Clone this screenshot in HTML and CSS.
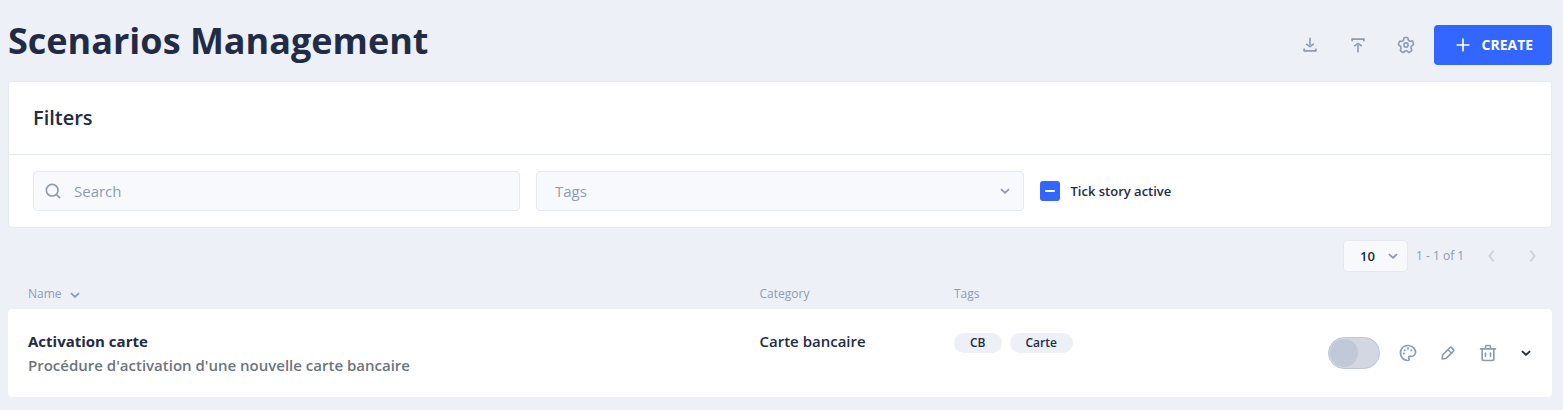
FILE: index.html
```html
<!DOCTYPE html>
<html lang="en">
<head>
<meta charset="utf-8">
<title>Scenarios Management</title>
<link rel="stylesheet" href="styles.css">
</head>
<body>
<svg class="defs" width="0" height="0">
  <symbol id="chevron" viewBox="0 0 16 16"><path d="M4.5 6.6 8 9.9l3.5-3.3" fill="none" stroke="currentColor" stroke-width="1.9" stroke-linecap="round" stroke-linejoin="round"/></symbol>
  <symbol id="angle" viewBox="0 0 16 16"><path d="M9.5 3 5.5 8l4 5" fill="none" stroke="currentColor" stroke-width="1.6" stroke-linecap="round" stroke-linejoin="round"/></symbol>
</svg>
<header class="header">
  <h1 class="title">Scenarios Management</h1>
  <div class="actions">
    <button class="ghost"><svg class="icon" viewBox="0 0 24 24"><rect x="4" y="18" width="16" height="2" rx="1"/><rect x="3" y="17" width="4" height="2" rx="1" transform="rotate(-90 5 18)"/><rect x="17" y="17" width="4" height="2" rx="1" transform="rotate(-90 19 18)"/><path d="M12 15a1 1 0 0 1-.58-.18l-4-2.82a1 1 0 0 1-.24-1.39 1 1 0 0 1 1.4-.24L12 12.76l3.4-2.56a1 1 0 0 1 1.2 1.6l-4 3a1 1 0 0 1-.6.2z"/><path d="M12 13a1 1 0 0 1-1-1V4a1 1 0 0 1 2 0v8a1 1 0 0 1-1 1z"/></svg></button>
    <button class="ghost"><svg class="icon" viewBox="0 0 24 24"><rect x="4" y="4" width="16" height="2" rx="1"/><rect x="17" y="5" width="4" height="2" rx="1" transform="rotate(90 19 6)"/><rect x="3" y="5" width="4" height="2" rx="1" transform="rotate(90 5 6)"/><path d="M8 14a1 1 0 0 1-.8-.4 1 1 0 0 1 .2-1.4l4-3a1 1 0 0 1 1.18 0l4 2.82a1 1 0 0 1 .24 1.39 1 1 0 0 1-1.4.24L12 11.24 8.6 13.8a1 1 0 0 1-.6.2z"/><path d="M12 21a1 1 0 0 1-1-1v-8a1 1 0 0 1 2 0v8a1 1 0 0 1-1 1z"/></svg></button>
    <button class="ghost"><svg class="icon" viewBox="0 0 24 24"><path d="M8.61 22a2.25 2.25 0 0 1-1.35-.46L5.19 20a2.37 2.37 0 0 1-.49-3.22 2.06 2.06 0 0 0 .23-1.86l-.06-.16a1.83 1.83 0 0 0-1.12-1.22h-.16a2.34 2.34 0 0 1-1.48-2.94L2.93 8a2.18 2.18 0 0 1 1.12-1.41 2.14 2.14 0 0 1 1.68-.12 1.93 1.93 0 0 0 1.78-.29l.13-.1a1.94 1.94 0 0 0 .73-1.51v-.24A2.32 2.32 0 0 1 10.66 2h2.55a2.26 2.26 0 0 1 1.6.67 2.37 2.37 0 0 1 .68 1.68v.28a1.76 1.76 0 0 0 .69 1.43l.11.08a1.74 1.74 0 0 0 1.59.26l.34-.11A2.26 2.26 0 0 1 21.1 7.8l.79 2.52a2.36 2.36 0 0 1-1.46 2.93l-.2.07A1.89 1.89 0 0 0 19 14.6a2 2 0 0 0 .25 1.65l.26.38a2.38 2.38 0 0 1-.5 3.23L17 21.41a2.24 2.24 0 0 1-3.22-.53l-.12-.17a1.75 1.75 0 0 0-1.5-.78 1.8 1.8 0 0 0-1.43.77l-.23.33A2.25 2.25 0 0 1 9 22a2 2 0 0 1-.39 0zM4.4 11.62a3.83 3.83 0 0 1 2.38 2.5v.12a4 4 0 0 1-.46 3.62.38.38 0 0 0 0 .51L8.47 20a.25.25 0 0 0 .37-.07l.23-.33a3.77 3.77 0 0 1 6.2 0l.12.18a.3.3 0 0 0 .18.12.25.25 0 0 0 .19-.05l2.06-1.56a.36.36 0 0 0 .07-.49l-.26-.38A4 4 0 0 1 17.1 14a3.92 3.92 0 0 1 2.49-2.61l.2-.07a.34.34 0 0 0 .19-.44l-.78-2.49a.35.35 0 0 0-.2-.19.21.21 0 0 0-.19 0l-.34.11a3.74 3.74 0 0 1-3.43-.57L15 7.65a3.76 3.76 0 0 1-1.49-3v-.31a.37.37 0 0 0-.1-.26.31.31 0 0 0-.21-.08h-2.54a.31.31 0 0 0-.29.33v.25a3.9 3.9 0 0 1-1.52 3.09l-.13.1a3.91 3.91 0 0 1-3.63.59.22.22 0 0 0-.14 0 .28.28 0 0 0-.12.15L4 11.12a.36.36 0 0 0 .22.45z" fill-rule="evenodd"/><path d="M12 15.5a3.5 3.5 0 1 1 3.5-3.5 3.5 3.5 0 0 1-3.5 3.5zm0-5a1.5 1.5 0 1 0 1.5 1.5 1.5 1.5 0 0 0-1.5-1.5z"/></svg></button>
    <button class="create"><svg class="icon" viewBox="0 0 24 24"><path d="M19 11h-6V5a1 1 0 0 0-2 0v6H5a1 1 0 0 0 0 2h6v6a1 1 0 0 0 2 0v-6h6a1 1 0 0 0 0-2z"/></svg><span>CREATE</span></button>
  </div>
</header>

<section class="card">
  <h2 class="card-title">Filters</h2>
  <div class="filters">
    <div class="field search"><svg class="icon" viewBox="0 0 24 24"><path d="M20.71 19.29l-3.4-3.39A7.92 7.92 0 0 0 19 11a8 8 0 1 0-8 8 7.92 7.92 0 0 0 4.9-1.69l3.39 3.4a1 1 0 0 0 1.42 0 1 1 0 0 0 0-1.42zM5 11a6 6 0 1 1 6 6 6 6 0 0 1-6-6z"/></svg><span>Search</span></div>
    <div class="field select"><span>Tags</span><svg class="chev"><use href="#chevron"/></svg></div>
    <div class="check"><span class="box"></span><span>Tick story active</span></div>
  </div>
</section>

<div class="pager">
  <div class="size"><span>10</span><svg class="chev"><use href="#chevron"/></svg></div>
  <span class="range">1 - 1 of 1</span>
  <svg class="angle"><use href="#angle"/></svg>
  <svg class="angle next"><use href="#angle"/></svg>
</div>

<div class="cols head">
  <div class="sort">Name <svg class="chev"><use href="#chevron"/></svg></div>
  <div>Category</div>
  <div>Tags</div>
</div>

<article class="cols row">
  <div class="cell">
    <div class="name">Activation carte</div>
    <div class="desc">Procédure d'activation d'une nouvelle carte bancaire</div>
  </div>
  <div class="cell">Carte bancaire</div>
  <div class="tags"><span class="tag">CB</span><span class="tag">Carte</span></div>
  <div class="tools">
    <span class="toggle"><span class="knob"></span></span>
    <svg class="icon" viewBox="0 0 24 24"><path d="M19.54 5.08A10.61 10.61 0 0 0 11.91 2a10 10 0 0 0-.05 20 2.58 2.58 0 0 0 2.53-1.89 2.52 2.52 0 0 0-.57-2.28.5.5 0 0 1 .37-.83h1.65A6.15 6.15 0 0 0 22 11.33a8.48 8.48 0 0 0-2.46-6.25zM15.88 15h-1.65a2.49 2.49 0 0 0-1.87 4.15.49.49 0 0 1 .12.49c-.05.21-.28.34-.59.36a8 8 0 0 1-7.82-9.11A8.1 8.1 0 0 1 11.92 4H12a8.47 8.47 0 0 1 6.1 2.48 6.5 6.5 0 0 1 1.9 4.77A4.17 4.17 0 0 1 15.88 15z"/><circle cx="12" cy="6.5" r="1.4"/><circle cx="16" cy="8.75" r="1.3"/><circle cx="8" cy="8.75" r="1.3"/><circle cx="7.1" cy="12.7" r="1.3"/></svg>
    <svg class="icon" viewBox="0 0 24 24"><path d="M19.4 7.34L16.66 4.6A2 2 0 0 0 14 4.53l-9 9a2 2 0 0 0-.57 1.21L4 18.91a1 1 0 0 0 .29.8A1 1 0 0 0 5 20h.09l4.17-.38a2 2 0 0 0 1.21-.57l9-9a1.92 1.92 0 0 0-.07-2.71zM9.08 17.62l-3 .28.27-3L12 9.32l2.7 2.7zM16 10.68L13.32 8l1.95-2L18 8.73z"/></svg>
    <svg class="icon" viewBox="0 0 24 24"><path d="M21 6h-5V4.33A2.42 2.42 0 0 0 13.5 2h-3A2.42 2.42 0 0 0 8 4.33V6H3a1 1 0 0 0 0 2h1v11a3 3 0 0 0 3 3h10a3 3 0 0 0 3-3V8h1a1 1 0 0 0 0-2zM10 4.33c0-.16.21-.33.5-.33h3c.29 0 .5.17.5.33V6h-4zM18 19a1 1 0 0 1-1 1H7a1 1 0 0 1-1-1V8h12z"/><path d="M9 17a1 1 0 0 0 1-1v-4a1 1 0 0 0-2 0v4a1 1 0 0 0 1 1zM15 17a1 1 0 0 0 1-1v-4a1 1 0 0 0-2 0v4a1 1 0 0 0 1 1z"/></svg>
    <svg class="chev expand"><use href="#chevron"/></svg>
  </div>
</article>
</body>
</html>
```
FILE: styles.css
```css
* { box-sizing: border-box; }
body {
  margin: 0;
  height: 410px;
  padding: 0 11px 0 8px;
  overflow: hidden;
  background: #edf0f7;
  color: #222b45;
  font-family: "Open Sans", sans-serif;
  font-size: 15px;
  line-height: 24px;
}
.defs { display: block; height: 0; }
.icon { width: 20px; height: 20px; fill: #8f9bb3; flex: none; display: block; }
.chev { width: 16px; height: 16px; color: #8f9bb3; flex: none; display: block; }
.header { display: flex; justify-content: space-between; height: 81px; }
.title { margin: 17px 0 0; font-size: 36px; line-height: 48px; font-weight: 700; }
.actions { display: flex; height: 40px; margin-top: 25px; }
.ghost { width: 48px; padding: 0; border: 0; background: none; display: flex; align-items: center; justify-content: center; }
.create {
  width: 118px;
  margin-left: 4px;
  padding: 0 0 0 19px;
  display: flex;
  align-items: center;
  gap: 8.5px;
  border: 0;
  border-radius: 4px;
  background: #3366ff;
  color: #fff;
  font: 700 14px/16px "Open Sans", sans-serif;
}
.create .icon { fill: #fff; }
.card { height: 147px; border: 1px solid #e4e9f2; border-radius: 4px; background: #fff; }
.card-title {
  margin: 0;
  height: 73px;
  padding: 24px;
  border-bottom: 1px solid #e4e9f2;
  font-size: 20px;
  line-height: 24px;
  font-weight: 600;
}
.filters { display: flex; gap: 16px; padding: 16px 24px; }
.field {
  width: 487px;
  height: 40px;
  display: flex;
  align-items: center;
  border: 1px solid #e4e9f2;
  border-radius: 4px;
  background: #f7f9fc;
  color: #8f9bb3;
}
.search { padding-left: 9px; gap: 11px; }
.select { width: 488px; padding: 0 10px 0 18px; justify-content: space-between; }
.check { display: flex; align-items: center; gap: 10.5px; font-size: 13px; font-weight: 600; }
.box { width: 20px; height: 20px; border-radius: 3px; background: #3366ff; display: grid; place-items: center; }
.box::after { content: ""; width: 10px; height: 2px; border-radius: 1px; background: #fff; }
.pager { display: flex; align-items: center; height: 32px; margin-top: 12px; padding-right: 12px; }
.size {
  width: 65px;
  height: 32px;
  margin-left: auto;
  padding: 0 6px 0 16px;
  display: flex;
  align-items: center;
  justify-content: space-between;
  border: 1px solid #e4e9f2;
  border-radius: 4px;
  background: #f7f9fc;
  font-size: 13px;
  font-weight: 600;
}
.range { width: 68px; padding-left: 8px; font-size: 12px; color: #8f9bb3; white-space: nowrap; }
.angle { width: 16px; height: 16px; margin-left: 8px; color: #c5cedd; }
.next { margin-left: 24px; transform: scaleX(-1); }
.cols { display: grid; grid-template-columns: 731.5px 194.5px 374px 1fr; padding-left: 20px; }
.head { height: 37px; padding-top: 10px; font-size: 12px; color: #8f9bb3; }
.sort { display: flex; align-items: center; gap: 5px; height: 24px; }
.sort .chev { margin-top: 2px; }
.row { height: 88px; padding-top: 20px; border-radius: 4px; background: #fff; }
.cell { font-weight: 600; }
.name { font-weight: 700; }
.desc { color: #6c757d; }
.tags { display: flex; gap: 8px; padding-top: 4px; }
.tag { height: 20px; padding: 0 16px; border-radius: 10px; background: #edf0f7; font-size: 12px; line-height: 20px; font-weight: 600; }
.tools { display: flex; align-items: center; gap: 20px; height: 48px; }
.toggle { width: 52px; height: 32px; padding: 1px; margin-right: -2px; border: 1px solid #c0c6d6; border-radius: 16px; background: #d2d7e2; }
.knob { display: block; width: 28px; height: 28px; border-radius: 50%; background: #c1c8d7; }
.expand { color: #222b45; }
```
